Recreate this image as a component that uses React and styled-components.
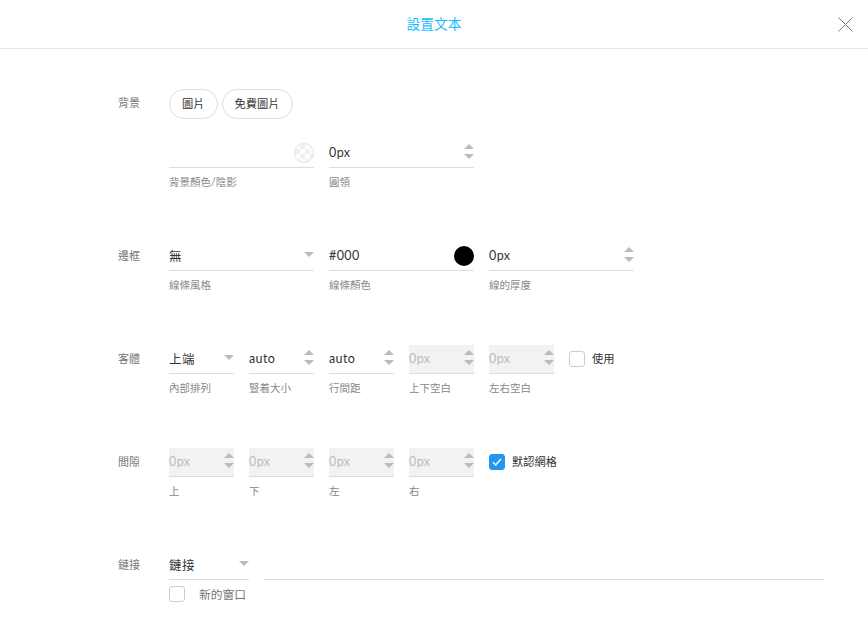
import styled, { createGlobalStyle } from 'styled-components';

const GlobalStyle = createGlobalStyle`
  html, body {
    margin: 0;
    background: #fff;
  }
  body {
    font-family: Lato, "Noto Sans CJK TC", sans-serif;
    font-size: 11.25px;
    color: #333;
  }
`;

const Page = styled.div`
  width: 868px;
  height: 640px;
  overflow: hidden;
`;

const Header = styled.header`
  position: relative;
  height: 48px;
  border-bottom: 1px solid #e6e6e6;
  display: flex;
  align-items: center;
  justify-content: center;
`;

const Title = styled.h1`
  margin: 0 0 2px;
  font-size: 13.75px;
  font-weight: 400;
  color: #1bbcff;
`;

const Close = styled.button`
  position: absolute;
  right: 15px;
  top: 17px;
  width: 15px;
  height: 15px;
  padding: 0;
  border: 0;
  background: none;
  display: block;
`;

const Body = styled.main`
  padding-top: 40px;
`;

const Section = styled.section`
  display: flex;
  margin-bottom: ${(p) => p.$gap || 0}px;
`;

const SectionLabel = styled.div`
  width: 140px;
  flex: none;
  margin-right: 29px;
  text-align: right;
  font-size: 11px;
  color: #777;
  line-height: 28px;
`;

const SectionBody = styled.div`
  display: flex;
  flex-direction: column;
`;

const PillRow = styled.div`
  display: flex;
  gap: 4px;
  margin-bottom: 20px;
`;

const Pill = styled.button`
  height: 30px;
  padding: 0 12px 2px;
  border: 1px solid #ddd;
  border-radius: 15px;
  background: #fff;
  font: inherit;
  color: #333;
`;

const FieldRow = styled.div`
  display: flex;
  gap: 15px;
  align-items: flex-start;
`;

const Field = styled.div`
  width: ${(p) => p.$width}px;
  flex: none;
`;

const Control = styled.div`
  height: 28px;
  border-bottom: 1px solid #ddd;
  background: ${(p) => (p.$disabled ? '#f2f2f2' : 'transparent')};
  color: ${(p) => (p.$disabled ? '#bbb' : '#333')};
  display: flex;
  align-items: center;
  justify-content: space-between;
  font-size: 12.5px;
  letter-spacing: 0.4px;
`;

const ControlValue = styled.span`
  padding-bottom: 2px;
`;

const Caption = styled.div`
  margin-top: 6px;
  color: #888;
  font-size: 10.5px;
  line-height: 16px;
`;

const Swatch = styled.span`
  width: 20px;
  height: 20px;
  border-radius: 50%;
  flex: none;
  box-sizing: border-box;
  background: ${(p) => p.$color};
`;

const TransparentSwatch = styled(Swatch)`
  border: 1px solid #e4e4e4;
  background: repeating-conic-gradient(#f0f0f0 0 25%, #fff 0 50%) 0 0 / 10px 10px;
`;

const CheckWrap = styled.label`
  display: flex;
  align-items: center;
  gap: ${(p) => p.$gap || 7}px;
  height: 28px;
  color: ${(p) => p.$color || '#333'};
`;

const CheckText = styled.span`
  padding-bottom: 2px;
  font-size: ${(p) => p.$size || 11.25}px;
`;

const Box = styled.span`
  width: 16px;
  height: 16px;
  box-sizing: border-box;
  border-radius: 3px;
  border: 1px solid ${(p) => (p.$checked ? '#2196f3' : '#ccc')};
  background: ${(p) => (p.$checked ? '#2196f3' : '#fff')};
  display: flex;
  align-items: center;
  justify-content: center;
  flex: none;
`;

const LinkRow = styled.div`
  display: flex;
  gap: 15px;
`;

const LinkInput = styled.div`
  width: 560px;
  height: 28px;
  border-bottom: 1px solid #ddd;
`;

const Glyph = styled.svg`
  flex: none;
  margin-bottom: 3px;
`;

const Spinner = () => (
  <Glyph width="10" height="15" viewBox="0 0 10 15">
    <path d="M5 0 10 5H0Z" fill="#bbb" />
    <path d="M0 10H10L5 15Z" fill="#bbb" />
  </Glyph>
);

const Caret = () => (
  <Glyph width="10" height="5" viewBox="0 0 10 5">
    <path d="M0 0H10L5 5Z" fill="#bbb" />
  </Glyph>
);

const Check = ({ checked, gap, color, size, children }) => (
  <CheckWrap $gap={gap} $color={color}>
    <Box $checked={checked}>
      {checked && (
        <svg width="10" height="8" viewBox="0 0 10 8">
          <path d="M1 4.2 3.7 7 9 1" fill="none" stroke="#fff" strokeWidth="1.4" />
        </svg>
      )}
    </Box>
    <CheckText $size={size}>{children}</CheckText>
  </CheckWrap>
);

const Input = ({ width, caption, value, disabled, trailing }) => (
  <Field $width={width}>
    <Control $disabled={disabled}>
      <ControlValue>{value}</ControlValue>
      {trailing}
    </Control>
    <Caption>{caption}</Caption>
  </Field>
);

export default function App() {
  return (
    <Page>
      <GlobalStyle />
      <Header>
        <Title>設置文本</Title>
        <Close aria-label="close">
          <svg width="15" height="15" viewBox="0 0 15 15">
            <path d="M.5.5 14.5 14.5M14.5.5.5 14.5" stroke="#777" strokeWidth="1" fill="none" />
          </svg>
        </Close>
      </Header>
      <Body>
        <Section $gap={52}>
          <SectionLabel>背景</SectionLabel>
          <SectionBody>
            <PillRow>
              <Pill>圖片</Pill>
              <Pill>免費圖片</Pill>
            </PillRow>
            <FieldRow>
              <Input width={145} caption="背景顏色/陰影" trailing={<TransparentSwatch />} />
              <Input width={145} caption="圓領" value="0px" trailing={<Spinner />} />
            </FieldRow>
          </SectionBody>
        </Section>

        <Section $gap={52}>
          <SectionLabel>邊框</SectionLabel>
          <FieldRow>
            <Input width={145} caption="線條風格" value="無" trailing={<Caret />} />
            <Input width={145} caption="線條顏色" value="#000" trailing={<Swatch $color="#000" />} />
            <Input width={145} caption="線的厚度" value="0px" trailing={<Spinner />} />
          </FieldRow>
        </Section>

        <Section $gap={52}>
          <SectionLabel>客體</SectionLabel>
          <FieldRow>
            <Input width={65} caption="內部排列" value="上端" trailing={<Caret />} />
            <Input width={65} caption="豎着大小" value="auto" trailing={<Spinner />} />
            <Input width={65} caption="行間距" value="auto" trailing={<Spinner />} />
            <Input width={65} caption="上下空白" value="0px" disabled trailing={<Spinner />} />
            <Input width={65} caption="左右空白" value="0px" disabled trailing={<Spinner />} />
            <Check>使用</Check>
          </FieldRow>
        </Section>

        <Section $gap={52}>
          <SectionLabel>間隙</SectionLabel>
          <FieldRow>
            <Input width={65} caption="上" value="0px" disabled trailing={<Spinner />} />
            <Input width={65} caption="下" value="0px" disabled trailing={<Spinner />} />
            <Input width={65} caption="左" value="0px" disabled trailing={<Spinner />} />
            <Input width={65} caption="右" value="0px" disabled trailing={<Spinner />} />
            <Check checked>默認網格</Check>
          </FieldRow>
        </Section>

        <Section>
          <SectionLabel>鏈接</SectionLabel>
          <SectionBody>
            <LinkRow>
              <Field $width={80}>
                <Control>
                  <ControlValue>鏈接</ControlValue>
                  <Caret />
                </Control>
              </Field>
              <LinkInput />
            </LinkRow>
            <Check gap={14} color="#777" size={11.75}>新的窗口</Check>
          </SectionBody>
        </Section>
      </Body>
    </Page>
  );
}
